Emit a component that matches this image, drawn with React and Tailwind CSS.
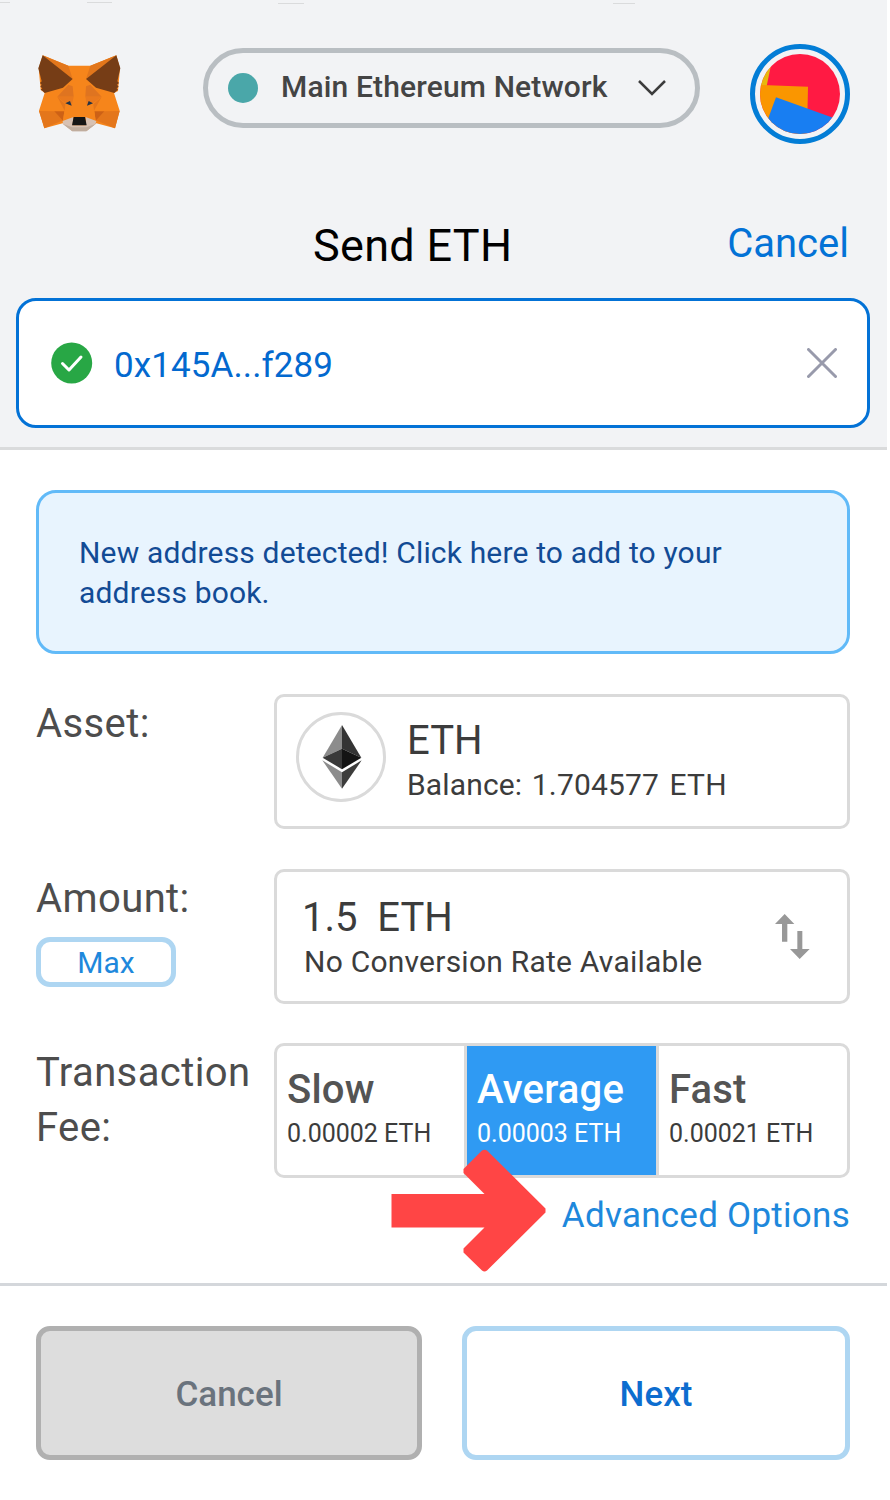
import React from "react";

function Fox() {
  return (
    <svg className="mt-[11px] h-[77px] w-[83px] shrink-0" viewBox="54 46 249 231">
      <path d="M68 47 L145 78 L211 78 L289 47 L300 86 L294 154 L282 160 L299 213 L285 266 L229 251 L199 274 L157 274 L128 251 L73 266 L57 213 L74 160 L62 150 L56 86Z" fill="#F6851B" />
      <path d="M68 47 L145 78 L158 118Z M289 47 L211 78 L198 118Z" fill="#E2761B" />
      <path d="M68 47 L158 118 L129 144 L74 160 L68 154 L62 150 L67 146 L61 141 L65 135 L60 130 L65 125 L55 86Z" fill="#763D16" />
      <path d="M289 47 L198 118 L228 144 L283 160 L289 154 L294 150 L290 146 L296 141 L291 135 L297 130 L292 125 L301 86Z" fill="#763D16" />
      <path d="M145 135 L112 171 L161 171 L158 140Z M211 135 L245 171 L196 171 L198 140Z" fill="#DF7420" />
      <path d="M112 171 L161 171 L155 198 L136 191Z M245 171 L196 171 L201 198 L219 191Z" fill="#E9791E" />
      <path d="M112 171 L136 194 L134 213Z M245 171 L220 194 L222 213Z" fill="#E4761B" />
      <path d="M57 214 L104 215 L129 242 L73 266Z M299 214 L252 215 L227 242 L285 266Z" fill="#E4761B" />
      <path d="M103 215 L133 215 L129 243Z M253 215 L223 215 L227 243Z" fill="#CD6116" />
      <path d="M133 215 L160 233 L129 243Z M223 215 L197 233 L227 243Z" fill="#F6851B" />
      <path d="M128 244 L160 232 L158 257 L198 257 L197 232 L229 244 L226 254 L199 275 L157 275 L129 254Z" fill="#D7C1B3" />
      <path d="M129 253 L157 263 L199 263 L227 253 L199 275 L157 275Z" fill="#C0AD9E" />
      <path d="M161 232 L195 232 L200 257 L156 257Z" fill="#161616" />
      <path d="M136 191 L150 184 L155 198Z M219 191 L206 184 L201 198Z" fill="#233447" />
    </svg>
  );
}

function Avatar() {
  return (
    <div className="flex h-[100px] w-[100px] shrink-0 items-center justify-center rounded-full border-[5px] border-[#037dd6]">
      <svg className="h-20 w-20" viewBox="60 60 240 240">
        <defs>
          <clipPath id="disc"><circle cx="180" cy="180" r="120" /></clipPath>
        </defs>
        <g clipPath="url(#disc)">
          <path d="M60 60H300V300H60Z" fill="#FF1A43" />
          <path d="M40 60H100L80 156H40Z" fill="#E8B80C" />
          <path d="M40 152L204 158L201 300H40Z" fill="#FA9600" />
          <path d="M108 190L300 259V320H60Z" fill="#187EF2" />
        </g>
      </svg>
    </div>
  );
}

function Eth() {
  return (
    <div className="ml-[19px] mt-[15px] flex h-[90px] w-[90px] shrink-0 items-center justify-center rounded-full border-[3px] border-[#dadada]">
      <svg className="ml-px h-[64px] w-[40px]" viewBox="156 107 120 192">
        <path d="M216 107L158 205L216 178Z" fill="#8c8c8c" />
        <path d="M216 107L274 205L216 178Z" fill="#343434" />
        <path d="M158 205L216 178V240Z" fill="#393939" />
        <path d="M274 205L216 178V240Z" fill="#141414" />
        <path d="M157 213L216 249V298Z" fill="#8c8c8c" />
        <path d="M275 213L216 249V298Z" fill="#3c3c3b" />
      </svg>
    </div>
  );
}

function Row({ label, extra, children }) {
  return (
    <div className="flex h-[135px]">
      <div className="w-[238px] shrink-0">
        <div className="mt-[2px] whitespace-nowrap text-[40px] leading-[55px] tracking-[0.4px] text-[#4d4d4d]">{label}</div>
        {extra}
      </div>
      <div className="flex h-[135px] w-[576px] overflow-hidden rounded-[10px] border-[3px] border-[#dadada] bg-white">{children}</div>
    </div>
  );
}

function Fee({ name, value, active, className }) {
  return (
    <div className={`${className} whitespace-nowrap pl-[10px] pt-[16px] ${active ? "bg-[#2f9af3] text-white" : "text-[#3c3c3c]"}`}>
      <div className={`text-[40px] font-medium leading-[56px] tracking-[0.2px] ${active ? "" : "text-[#545454]"}`}>{name}</div>
      <div className="text-[25px] leading-[32px]">{value}</div>
    </div>
  );
}

export default function App() {
  return (
    <div className="relative h-[1500px] w-[890px] overflow-hidden bg-white font-['Roboto',sans-serif]">
      <div className="absolute left-0 top-[2px] h-px w-[10px] bg-[#dadbdc]" />
      <div className="absolute left-[87px] top-[2px] h-px w-[25px] bg-[#dadbdc]" />
      <div className="absolute left-[278px] top-[3px] h-px w-[26px] bg-[#dadbdc]" />
      <div className="absolute left-[613px] top-[3px] h-px w-[22px] bg-[#dadbdc]" />
      <div className="w-[887px]">
        <header className="h-[450px] border-b-[3px] border-[#dadbdc] bg-[#f2f3f5] pt-[44px]">
          <div className="flex h-[100px] pl-[38px]">
            <Fox />
            <div className="ml-[82px] mt-1 flex h-20 w-[497px] items-center rounded-full border-[5px] border-[#b9bec2] pl-[20px]">
              <div className="h-[30px] w-[30px] rounded-full bg-[#4aa7a9]" />
              <div className="ml-[23px] mt-[-3px] w-[327px] whitespace-nowrap text-[30px] font-medium leading-10 tracking-[0.15px] text-[#444]">Main Ethereum Network</div>
              <svg className="ml-[30px] h-[18px] w-[28px]" viewBox="0 0 28 18" fill="none" stroke="#3c3c3c" strokeWidth="2.5">
                <path d="M1 2L14 15L27 2" />
              </svg>
            </div>
            <div className="ml-[50px]"><Avatar /></div>
          </div>
          <div className="mt-[75px] flex h-[79px] justify-between pl-[313px] pr-[38px]">
            <h1 className="pt-[2px] text-[45px] leading-[50px] tracking-[0.3px] text-black">Send ETH</h1>
            <a className="text-[40px] leading-[50px] text-[#0372d6]">Cancel</a>
          </div>
          <div className="ml-4 flex h-[130px] w-[854px] items-center rounded-[20px] border-[3px] border-[#0372d6] bg-white pl-8 pr-[30px]">
            <svg className="mt-[-1px] h-[42px] w-[42px]" viewBox="0 0 42 42" fill="none">
              <circle cx="20.7" cy="21" r="20.5" fill="#28a745" />
              <path d="M11.500 21.500L18 28L30 15" stroke="white" strokeWidth="3" strokeLinecap="round" strokeLinejoin="round" />
            </svg>
            <div className="ml-[21px] mt-[6px] text-[35px] leading-10 tracking-[0.1px] text-[#0369cf]">0x145A...f289</div>
            <svg className="ml-auto h-[30px] w-[30px]" viewBox="0 0 30 30" stroke="#989aab" strokeWidth="3" strokeLinecap="round">
              <path d="M1.5 1.5L28.5 28.5M28.5 1.5L1.5 28.5" />
            </svg>
          </div>
        </header>

        <main className="h-[833px] pl-9 pt-10">
          <div className="h-[164px] w-[814px] rounded-[20px] border-[3px] border-[#61baf8] bg-[#e8f4fe] pl-[40px] pt-[40px] text-[30px] leading-10 tracking-[0.16px] text-[#124b95]">
            New address detected! Click here to add to your<br />address book.
          </div>
          <div className="mt-10 flex flex-col gap-[39.5px]">
            <Row label="Asset:">
              <Eth />
              <div className="ml-[21px] whitespace-pre pt-[19px] text-[#3c3c3c]">
                <div className="text-[40px] leading-[50px]">ETH</div>
                <div className="mt-[-1px] text-[30px] leading-[40px] tracking-[0.15px]">Balance: <span className="ml-[2px]">1.704577</span> <span className="ml-[3px]">ETH</span></div>
              </div>
            </Row>
            <Row
              label="Amount:"
              extra={<button className="mt-[11px] block h-[50px] w-[140px] rounded-[14px] border-[5px] border-[#aed6f2] text-[30px] leading-[41px] text-[#1e88dc]">Max</button>}
            >
              <div className="whitespace-pre pl-[27px] pt-[21px] text-[#3c3c3c]">
                <div className="ml-[-2px] text-[40px] leading-[50px]">1.5  ETH</div>
                <div className="mt-[-1px] text-[30px] leading-[40px] tracking-[0.23px]">No Conversion Rate Available</div>
              </div>
              <svg className="ml-auto mr-[37px] mt-[42px] h-[45px] w-[35px] shrink-0" viewBox="74 162 105 135" fill="#989898">
                <path d="M103 162L132 192H111V245H95V192H74Z M141 213H156V267H178L148 297L119 267H141Z" />
              </svg>
            </Row>
            <Row label={<>Transaction<br />Fee:</>}>
              <Fee name="Slow" value="0.00002 ETH" className="w-[190px] border-r-[3px] border-[#dadada]" />
              <Fee name="Average" value="0.00003 ETH" active className="w-[189px]" />
              <Fee name="Fast" value="0.00021 ETH" className="w-[191px] border-l-[3px] border-[#dadada]" />
            </Row>
          </div>
          <div className="mt-[16px] w-[814px] text-right text-[35px] leading-[44px] tracking-[0.26px] text-[#1e88dc]">Advanced Options</div>
        </main>

        <footer className="flex gap-[40px] border-t-[3px] border-[#d4d7db] pl-9 pt-10">
          <button className="h-[134px] w-[386px] rounded-[14px] border-[5px] border-[#b0b0b0] bg-[#dddddd] pt-[5px] text-[35px] font-medium text-[#6a737d]">Cancel</button>
          <button className="h-[134px] w-[388px] rounded-[14px] border-[5px] border-[#aed6f2] bg-white pt-[5px] text-[35px] font-medium text-[#0d6dcf]">Next</button>
        </footer>
      </div>
      <svg className="absolute left-[391px] top-[1149px] h-[124px] w-[156px]" viewBox="391 1149 156 124">
        <path d="M391.5 1194H484.5L463.5 1173V1169L482 1150.5Q484.500 1149 487 1150.500L545.5 1208.500V1212.500L487 1270.500Q484.500 1272.500 482 1270.500L463.500 1252.500V1248.500L484.500 1227.500H391.500Z" fill="#ff4545" />
      </svg>
    </div>
  );
}
